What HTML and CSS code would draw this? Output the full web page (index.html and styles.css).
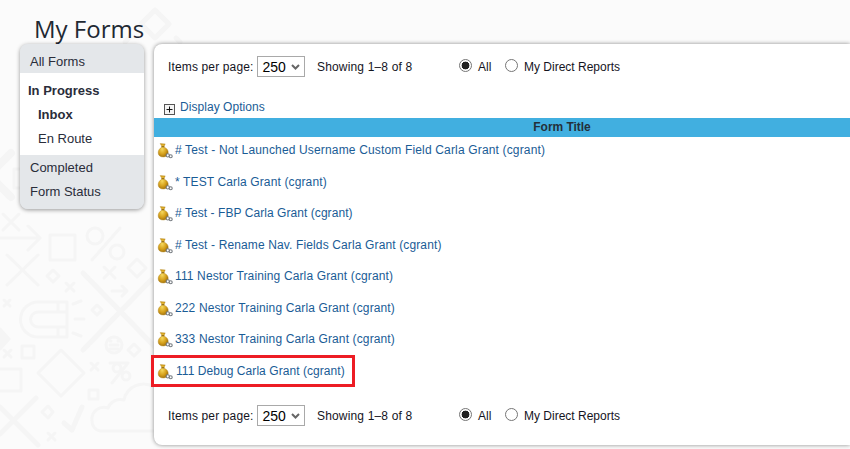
FILE: index.html
```html
<!DOCTYPE html>
<html lang="en">
<head>
<meta charset="utf-8">
<title>My Forms</title>
<link rel="stylesheet" href="styles.css">
</head>
<body>
<svg class="backdrop" width="850" height="449" viewBox="0 0 850 449" aria-hidden="true">
  <g fill="none" stroke-linecap="round" stroke-linejoin="round" class="bg-lines">
    <path d="M3 214l16 16M19 214L3 230"/>
    <path d="M0 238h38M28 226l12 12-12 12"/>
    <rect x="50" y="235" width="25" height="25"/>
    <circle cx="95" cy="236" r="8"/><circle cx="117" cy="252" r="7"/><path d="M92 260l28-32"/>
    <path d="M7 285l31-30M7 255l31 30"/>
    <path d="M53 270l6 6-6 6-6-6z"/>
    <path d="M66 283l8 8M74 283l-8 8"/>
    <path d="M104 267l11 11M115 267l-11 11"/>
    <path d="M137 259l9 9-9 9-9-9z"/>
    <path d="M112 291h15M122 286l5 5-5 5"/>
    <path d="M83 273l72 74M83 350l68-70" class="thick"/>
    <path d="M4 300l6 6M10 300l-6 6"/>
    <path d="M67 302H38a17 17 0 0 0 0 35h29zM67 312H38a7 7 0 0 0 0 15h29M58 302v10M58 327v10"/>
    <path d="M73 304l8-3M75 319h9M73 333l8 3"/>
    <path d="M97 305l5 5-5 5-5-5z"/>
    <path d="M0 329l9 10-9 10z" class="solid"/>
    <circle cx="114" cy="345" r="8"/><path d="M110 345h8M110 341h1M118 341h1M110 349h8"/>
    <path d="M134 344l6 6-6 6-6-6z"/>
    <path d="M4 350l7 7M11 350l-7 7"/>
    <rect x="22" y="346" width="12" height="12"/>
    <path d="M0 369h21v22H0"/>
    <path d="M61 350l23 23-23 23-23-23z"/>
    <path d="M91 363l7 7M98 363l-7 7"/>
    <circle cx="117" cy="368" r="4"/><circle cx="126" cy="376" r="4"/><path d="M112 383l16-20M110 363h18"/>
    <rect x="89" y="390" width="9" height="9"/>
    <path d="M0 407l38 38M36 398L0 434" class="thick"/>
    <path d="M48 406l5 6-5 6-6-6z"/>
    <path d="M64 423l8 7 10-23" class="thick"/>
    <path d="M48 433l7 7M55 433l-7 7"/>
    <path d="M154 387a20 20 0 0 0-30 13 13 13 0 0 0-16 8 12 12 0 0 0-16 13 10 10 0 0 0 8 10h54"/>
    <path d="M155 10l14 14-14 14-14-14z" class="thick"/>
    <path d="M125 42l4-4M180 42l-4-4" class="thick"/>
    <path d="M11 153l-22 22 22 22" class="wide"/>
    <rect x="14" y="169" width="10" height="19"/>
  </g>
</svg>

<div class="page">
  <h1 class="page-title">My Forms</h1>
  <div class="layout">
    <nav class="sidebar">
      <div class="nav-group nav-group-first">
        <a class="nav-item">All Forms</a>
      </div>
      <div class="nav-group nav-group-current">
        <a class="nav-item nav-heading">In Progress</a>
        <a class="nav-item nav-sub nav-active">Inbox</a>
        <a class="nav-item nav-sub">En Route</a>
      </div>
      <div class="nav-group nav-group-last">
        <a class="nav-item">Completed</a>
        <a class="nav-item">Form Status</a>
      </div>
    </nav>

    <main class="card">
      <div class="toolbar">
        <label class="per-page">Items per page:
          <select class="per-page-select"><option>250</option></select>
        </label>
        <span class="showing">Showing 1–8 of 8</span>
        <label class="radio radio-all"><input type="radio" name="scope-top" checked> All</label>
        <label class="radio"><input type="radio" name="scope-top"> My Direct Reports</label>
      </div>

      <div class="display-options">
        <span class="expander"><svg width="11" height="11" viewBox="0 0 11 11"><rect x=".5" y=".5" width="10" height="10" fill="#f4f4f4" stroke="#555"/><path d="M2.5 5.500h6M5.500 2.500v6" stroke="#111" fill="none"/></svg></span>
        <a class="display-link">Display Options</a>
      </div>

      <div class="table-head">Form Title</div>

      <svg width="0" height="0" class="defs" aria-hidden="true">
        <defs>
          <radialGradient id="gold" cx=".4" cy=".4" r=".7">
            <stop offset="0" stop-color="#f6d95f"/><stop offset=".55" stop-color="#d6a11c"/><stop offset="1" stop-color="#94660c"/>
          </radialGradient>
          <symbol id="bag" viewBox="0 0 16 16">
            <path d="M3.200 .6l5 .3-1.200 2.500.6 1C10.300 5.500 11.400 7.600 11.200 9.700 11 12.300 9 14 6.200 14S1.300 12.500 1.200 9.900C1.100 7.500 2.600 5.300 4.700 4.300L4.800 3.300z" fill="url(#gold)" stroke="#b08418" stroke-width=".4"/>
            <path d="M4.500 3.700l2.900.1" stroke="#7a5408" stroke-width=".9"/>
            <circle cx="10.800" cy="12.400" r="1.600" fill="#fff" stroke="#767b80" stroke-width="1.100"/>
            <circle cx="13.700" cy="13.300" r="1.500" fill="#fff" stroke="#767b80" stroke-width="1.100"/>
          </symbol>
        </defs>
      </svg>

      <ul class="rows">
        <li class="row"><svg class="bag"><use href="#bag"/></svg><a class="row-link row-link-loose"># Test - Not Launched Username Custom Field Carla Grant (cgrant)</a></li>
        <li class="row"><svg class="bag"><use href="#bag"/></svg><a class="row-link">* TEST Carla Grant (cgrant)</a></li>
        <li class="row"><svg class="bag"><use href="#bag"/></svg><a class="row-link row-link-tight"># Test - FBP Carla Grant (cgrant)</a></li>
        <li class="row"><svg class="bag"><use href="#bag"/></svg><a class="row-link"># Test - Rename Nav. Fields Carla Grant (cgrant)</a></li>
        <li class="row"><svg class="bag"><use href="#bag"/></svg><a class="row-link">111 Nestor Training Carla Grant (cgrant)</a></li>
        <li class="row"><svg class="bag"><use href="#bag"/></svg><a class="row-link">222 Nestor Training Carla Grant (cgrant)</a></li>
        <li class="row"><svg class="bag"><use href="#bag"/></svg><a class="row-link">333 Nestor Training Carla Grant (cgrant)</a></li>
        <li class="row"><span class="highlight"><svg class="bag"><use href="#bag"/></svg><a class="row-link row-link-tight row-link-wide">111 Debug Carla Grant (cgrant)</a></span></li>
      </ul>

      <div class="toolbar toolbar-bottom">
        <label class="per-page">Items per page:
          <select class="per-page-select"><option>250</option></select>
        </label>
        <span class="showing">Showing 1–8 of 8</span>
        <label class="radio radio-all"><input type="radio" name="scope-bottom" checked> All</label>
        <label class="radio"><input type="radio" name="scope-bottom"> My Direct Reports</label>
      </div>
    </main>
  </div>
</div>
</body>
</html>
```

FILE: styles.css
```css
* { box-sizing: border-box; }
html, body { margin: 0; height: 100%; overflow: hidden; }
body {
  background: #fbfbfb;
  font-family: "Liberation Sans", Arial, sans-serif;
  font-size: 12px;
  color: #1c1c28;
}
.backdrop { position: absolute; left: 0; top: 0; z-index: 0; }
.bg-lines { stroke: #f5f5f5; stroke-width: 3; }
.bg-lines .thick { stroke-width: 5; }
.bg-lines .wide { stroke-width: 8; }
.bg-lines .solid { fill: #f5f5f5; }
.page { position: relative; z-index: 1; }
.page-title {
  margin: 0 0 0 34px;
  height: 44px;
  padding-top: 12px;
  font-family: "Open Sans", sans-serif;
  font-weight: 400;
  font-size: 24px;
  line-height: 33px;
  color: #1f2933;
}
.layout { display: flex; align-items: flex-start; gap: 10px; padding-left: 20px; }

.sidebar {
  width: 124px;
  flex: none;
  background: #e4e7ea;
  border-radius: 8px;
  box-shadow: 0 1px 4px rgba(0,0,0,.4);
  overflow: hidden;
  font-size: 13px;
}
.nav-group { background: #e4e7ea; }
.nav-group-first { padding-top: 5px; }
.nav-group-current { background: #fff; padding: 5px 0; }
.nav-group-last { padding-bottom: 6px; }
.nav-item { display: block; height: 24px; line-height: 26px; padding-left: 10px; color: #2a2d3a; }
.nav-heading { font-weight: 700; padding-left: 8px; }
.nav-sub { padding-left: 18px; }
.nav-active { font-weight: 700; }

.card {
  flex: 1;
  height: 401px;
  background: #fff;
  border-radius: 8px 0 0 8px;
  box-shadow: 0 0 4px rgba(0,0,0,.45);
  letter-spacing: .14px;
}
.toolbar { display: flex; align-items: center; height: 21px; margin-top: 12px; padding-left: 14px; color: #14141e; }
.per-page { display: flex; align-items: center; gap: 4px; width: 149px; flex: none; }
.per-page-select {
  appearance: none;
  width: 48px;
  height: 21px;
  flex: none;
  font-family: "Liberation Sans", Arial, sans-serif;
  font-size: 14px;
  color: #000;
  border: 1px solid #a9a9a9;
  border-radius: 0;
  padding: 0 0 0 4px;
  background: #fff url("data:image/svg+xml,%3Csvg xmlns='http://www.w3.org/2000/svg' width='9' height='6'%3E%3Cpath d='M1 1l3.500 3.500L8 1' fill='none' stroke='%23666' stroke-width='2'/%3E%3C/svg%3E") no-repeat right 4px center;
}
.showing { width: 142px; flex: none; letter-spacing: .16px; }
.radio { display: flex; align-items: center; gap: 6px; letter-spacing: 0; }
.radio input {
  appearance: none;
  margin: 0;
  width: 13px;
  height: 13px;
  border: 1px solid #767676;
  border-radius: 50%;
  background: #fff;
  position: relative;
  top: -1px;
}
.radio input:checked { background: radial-gradient(circle, #222 0, #222 3.6px, #fff 4.2px); }
.radio-all { width: 46px; flex: none; }
.display-options { display: flex; align-items: flex-start; height: 23px; margin-top: 18px; padding-left: 10px; gap: 5px; }
.expander { display: block; margin-top: 9px; height: 11px; }
.display-link { line-height: 14px; margin-top: 5px; color: #1a5c96; letter-spacing: .05px; }
.table-head {
  height: 19px;
  line-height: 19px;
  padding-left: 120px;
  background: #41afe0;
  text-align: center;
  font-weight: 700;
  color: #24303a;
  letter-spacing: -.05px;
}
.defs { position: absolute; }
.rows { list-style: none; margin: 0; padding: 0; display: grid; grid-auto-rows: 31.5px; }
.row { display: flex; align-items: flex-start; padding-left: 3px; padding-top: 6px; }
.bag { width: 16px; height: 16px; flex: none; }
.row-link { margin-left: 2px; line-height: 14px; color: #1a5c96; letter-spacing: .13px; }
.row-link-loose { letter-spacing: .16px; }
.row-link-tight { letter-spacing: .06px; }
.row-link-wide { margin-left: 3px; }
.highlight { display: inline-flex; align-items: flex-start; outline: 3px solid #ed1c24; margin: -6px 0 0 -3px; padding: 6px 0 0 3px; height: 26px; width: 198px; }
.toolbar-bottom { margin-top: 16px; }
```
